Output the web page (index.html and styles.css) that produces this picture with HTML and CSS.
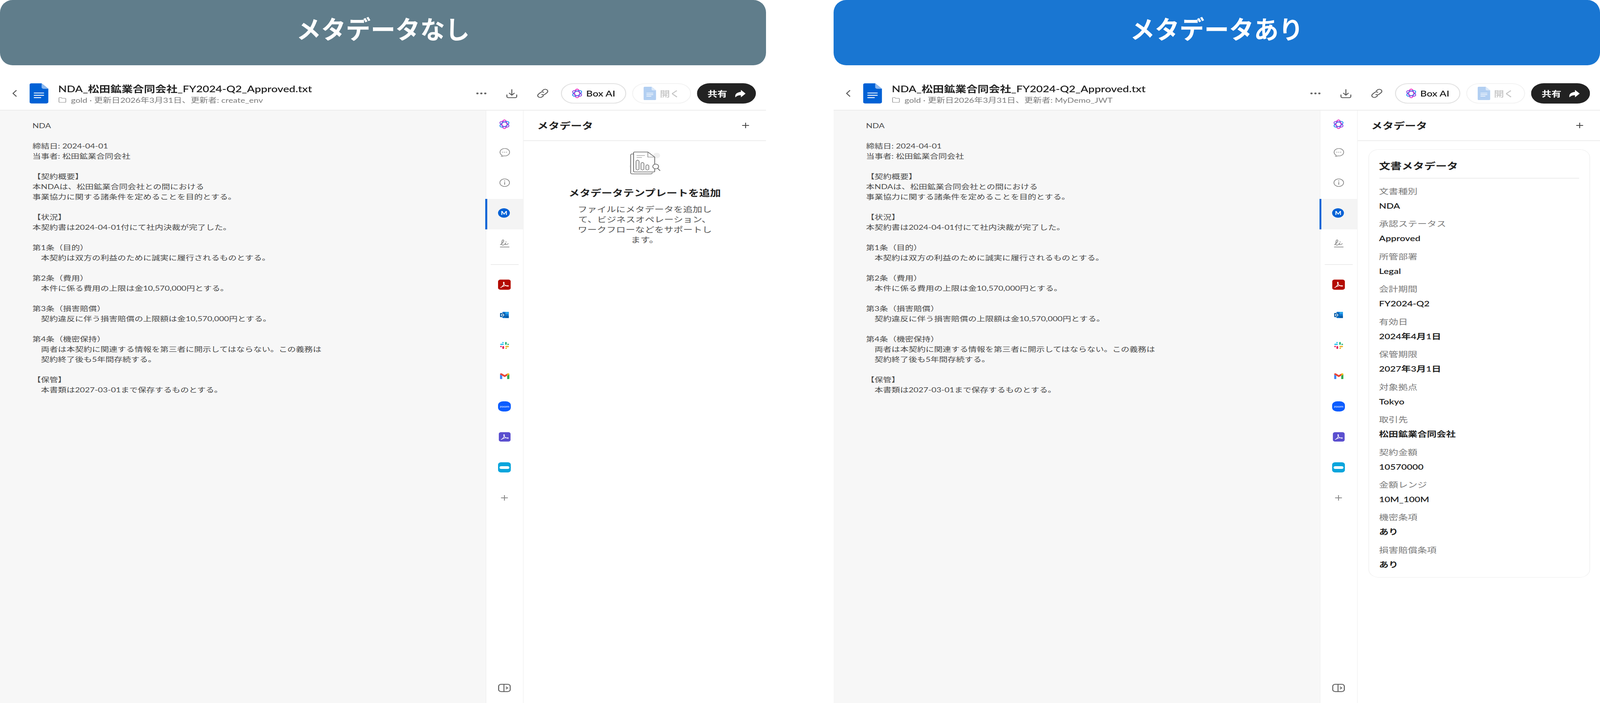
FILE: index.html
```html
<!DOCTYPE html>
<html lang="ja">
<head>
<meta charset="utf-8">
<title>メタデータ比較</title>
<link rel="stylesheet" href="styles.css">
</head>
<body>
<svg class="defs" xmlns="http://www.w3.org/2000/svg">
  <symbol id="i-chevron" viewBox="0 0 12 20"><path d="M9.5 2 2.5 10l7 8" fill="none" stroke="#555" stroke-width="2"/></symbol>
  <symbol id="i-file" viewBox="0 0 39 52">
    <path d="M4 0H25L39 14V48a4 4 0 0 1-4 4H4a4 4 0 0 1-4-4V4a4 4 0 0 1 4-4Z" fill="#0061d5"/>
    <path d="M25 0 39 14H29a4 4 0 0 1-4-4Z" fill="#8db8ee"/>
    <path d="M9 25H30M9 31H30M9 37H24" stroke="#fff" stroke-width="2.2" fill="none"/>
  </symbol>
  <symbol id="i-folder" viewBox="0 0 16 15"><path d="M1 3a1.5 1.5 0 0 1 1.5-1.5h3L7 3.5h6.5A1.5 1.5 0 0 1 15 5v7.5a1.5 1.5 0 0 1-1.5 1.5h-11A1.5 1.5 0 0 1 1 12.500Z" fill="none" stroke="#8a8a8a" stroke-width="1.200"/></symbol>
  <symbol id="i-dots" viewBox="0 0 24 6"><circle cx="4" cy="3" r="2.300" fill="#666"/><circle cx="12" cy="3" r="2.300" fill="#666"/><circle cx="20" cy="3" r="2.300" fill="#666"/></symbol>
  <symbol id="i-download" viewBox="0 0 24 24"><path d="M12 1.500V16M6.500 11 12 16.500 17.500 11M2 15v5a3 3 0 0 0 3 3h14a3 3 0 0 0 3-3v-5" fill="none" stroke="#5a5a5a" stroke-width="2"/></symbol>
  <symbol id="i-link" viewBox="0 0 24 24"><path d="M10 6.500 13.500 3a5 5 0 0 1 7.300 7l-4.300 4.300a5 5 0 0 1-7 0M14 17.500 10.500 21a5 5 0 0 1-7.300-7l4.300-4.300a5 5 0 0 1 7 0" fill="none" stroke="#5a5a5a" stroke-width="2"/></symbol>
  <symbol id="i-atom" viewBox="0 0 24 24" preserveAspectRatio="none">
    <ellipse cx="12" cy="12" rx="5.500" ry="11" fill="none" stroke="#e81fc0" stroke-width="1.800"/>
    <ellipse cx="12" cy="12" rx="5.500" ry="11" fill="none" stroke="#1b8bf0" stroke-width="1.800" transform="rotate(60 12 12)"/>
    <ellipse cx="12" cy="12" rx="5.500" ry="11" fill="none" stroke="#8f3fe0" stroke-width="1.800" transform="rotate(-60 12 12)"/>
  </symbol>
  <symbol id="i-share" viewBox="0 0 24 24"><path d="M14 2 24 12 14 22V16.500c-4.500 0-8.500 1-11.500 5.500-.5 0-.5-2-.5-3.500C2 12 7.500 8 14 7.500Z" fill="#fff"/></symbol>
  <symbol id="i-plus" viewBox="0 0 16 16"><path d="M8 1V15M1 8H15" stroke="currentColor" stroke-width="1.800" fill="none"/></symbol>
  <symbol id="i-comment" viewBox="0 0 24 24"><path d="M12 2a10 10 0 0 0-5.500 18.300c.2 1-.2 2-1 2.700 2 0 3.500-.5 4.500-1.300A10 10 0 1 0 12 2Z" fill="none" stroke="#8a8a8a" stroke-width="1.600"/><circle cx="8" cy="12" r="1" fill="#8a8a8a"/><circle cx="12" cy="12" r="1" fill="#8a8a8a"/><circle cx="16" cy="12" r="1" fill="#8a8a8a"/></symbol>
  <symbol id="i-info" viewBox="0 0 24 24"><circle cx="12" cy="12" r="10.200" fill="none" stroke="#8a8a8a" stroke-width="1.600"/><path d="M12 10.500V17.500" stroke="#8a8a8a" stroke-width="1.800"/><circle cx="12" cy="7.300" r="1.200" fill="#8a8a8a"/></symbol>
  <symbol id="i-sign" viewBox="0 0 24 24"><path d="M2.500 15.500C7 11 10.500 6 10 3.500 9.500 1 7 1.500 6.500 4.500 6 8 5.500 12 6 14.500c.4 2 2.500 2 4.500.5 1.500-1.200 2.500-3 3.500-4-.3 1.500-1 3.800.2 4 1.500.2 3.800-1.500 5.800-3.500" fill="none" stroke="#8a8a8a" stroke-width="1.600"/><circle cx="14.800" cy="6.800" r="1" fill="#8a8a8a"/><path d="M2 21H22" stroke="#8a8a8a" stroke-width="1.700"/></symbol>
  <symbol id="i-pdf" viewBox="0 0 26 26">
    <rect width="26" height="26" rx="5" fill="currentColor"/>
    <path d="M5 20.500c3-1 6.500-6 7.500-11.500.4-2.500-1.500-3.500-1.700-1.500-.2 3.500 4 8.500 8 9.500 3 .6 3.500-1.600.7-1.700-4-.2-9.500 1.200-14.500 5.200Z" fill="none" stroke="#fff" stroke-width="1.400"/>
  </symbol>
  <symbol id="i-outlook" viewBox="0 0 18 18">
    <rect x="5" y="1" width="13" height="16" rx="1" fill="#0f78d4"/>
    <rect x="11" y="1" width="7" height="5.500" fill="#2ba5ec"/>
    <rect x="11" y="11" width="7" height="6" fill="#0a5ea8"/>
    <rect x="0" y="4" width="10.500" height="10.500" rx="1.200" fill="#0a5ea8"/>
    <circle cx="5.200" cy="9.200" r="2.500" fill="none" stroke="#fff" stroke-width="1.300"/>
  </symbol>
  <symbol id="i-slack" viewBox="0 0 20 20">
    <rect x="1" y="5.500" width="7.500" height="3.500" rx="1.750" fill="#36c5f0"/><rect x="5" y="1" width="3.500" height="3.500" rx="1.750" fill="#36c5f0"/>
    <rect x="11" y="1" width="3.500" height="7.500" rx="1.750" fill="#2eb67d"/><rect x="15.500" y="5.500" width="3.500" height="3.500" rx="1.750" fill="#2eb67d"/>
    <rect x="11.500" y="11" width="7.500" height="3.500" rx="1.750" fill="#ecb22e"/><rect x="11.500" y="15.500" width="3.500" height="3.500" rx="1.750" fill="#ecb22e"/>
    <rect x="5.500" y="11.500" width="3.500" height="7.500" rx="1.750" fill="#e01e5a"/><rect x="1" y="11" width="3.500" height="3.500" rx="1.750" fill="#e01e5a"/>
  </symbol>
  <symbol id="i-gmail" viewBox="0 0 19 15">
    <path d="M0 3V14a1 1 0 0 0 1 1H4.500V6.500Z" fill="#4285f4"/>
    <path d="M14.500 6.500V15H18a1 1 0 0 0 1-1V3Z" fill="#34a853"/>
    <path d="M0 2.500C0 .5 2.300-.5 3.800.7L9.500 5 15.200.7 14.500 6.500 9.500 10 4.500 6.500 0 3Z" fill="#ea4335"/>
    <path d="M14.500 6.500 15.200.7C16.700-.5 19 .5 19 2.500V3Z" fill="#fbbc04"/>
  </symbol>
  <symbol id="i-collapse" viewBox="0 0 26 21"><rect x="1.200" y="1.200" width="23.600" height="18.600" rx="5" fill="none" stroke="#666" stroke-width="2.200"/><path d="M12 1V20" stroke="#666" stroke-width="2"/><path d="M16 7.500 19.500 10.500 16 13.500" fill="none" stroke="#666" stroke-width="2"/></symbol>
  <symbol id="i-empty" viewBox="0 0 64 60">
    <circle cx="56" cy="10" r="7" fill="#f0f0f0"/><circle cx="4" cy="38" r="4" fill="#f0f0f0"/>
    <path d="M10 6H6a3 3 0 0 0-3 3V54a3 3 0 0 0 3 3H44a3 3 0 0 0 3-3" fill="#fff" stroke="#666" stroke-width="1.500"/>
    <path d="M9 3a2 2 0 0 1 2-2H38L52 14V50a2 2 0 0 1-2 2H11a2 2 0 0 1-2-2Z" fill="#fff" stroke="#666" stroke-width="1.500"/>
    <path d="M38 1V14H52M15 10H32M15 15H26" fill="none" stroke="#777" stroke-width="1.200"/>
    <rect x="14" y="22" width="6" height="25" rx="3" fill="#fff" stroke="#666" stroke-width="1.300"/><rect x="24" y="28" width="6" height="19" rx="3" fill="#fff" stroke="#666" stroke-width="1.300"/><rect x="34" y="34" width="6" height="13" rx="3" fill="#fff" stroke="#666" stroke-width="1.300"/>
    <circle cx="54" cy="38" r="6" fill="#fff" stroke="#666" stroke-width="1.500"/><path d="M58 43 63 49" stroke="#666" stroke-width="1.800"/>
  </symbol>
</svg>

<main class="page">
  <section class="panel">
    <h1 class="banner banner-gray">メタデータなし</h1>
    <div class="shot">
      <header class="top">
        <svg class="ic-chevron"><use href="#i-chevron"/></svg>
        <svg class="ic-file"><use href="#i-file"/></svg>
        <div class="names">
          <div class="fname">NDA_松田鉱業合同会社_FY2024-Q2_Approved.txt</div>
          <div class="fmeta"><svg class="ic-folder"><use href="#i-folder"/></svg><span>gold · 更新日2026年3月31日、更新者: create_env</span></div>
        </div>
        <div class="actions">
          <span class="act"><svg class="ic-dots"><use href="#i-dots"/></svg></span>
          <span class="act"><svg class="ic-act"><use href="#i-download"/></svg></span>
          <span class="act"><svg class="ic-act"><use href="#i-link"/></svg></span>
          <span class="pill pill-ai"><svg class="ic-atom"><use href="#i-atom"/></svg>Box AI</span>
          <span class="pill pill-open"><svg class="ic-file-sm"><use href="#i-file"/></svg>開く</span>
          <span class="pill pill-share">共有<svg class="ic-share"><use href="#i-share"/></svg></span>
        </div>
      </header>
      <div class="body">
        <article class="doc">NDA

締結日: 2024-04-01
当事者: 松田鉱業合同会社

【契約概要】
本NDAは、松田鉱業合同会社との間における
事業協力に関する諸条件を定めることを目的とする。

【状況】
本契約書は2024-04-01付にて社内決裁が完了した。

第1条（目的）
　本契約は双方の利益のために誠実に履行されるものとする。

第2条（費用）
　本件に係る費用の上限は金10,570,000円とする。

第3条（損害賠償）
　契約違反に伴う損害賠償の上限額は金10,570,000円とする。

第4条（機密保持）
　両者は本契約に関連する情報を第三者に開示してはならない。この義務は
　契約終了後も5年間存続する。

【保管】
　本書類は2027-03-01まで保存するものとする。</article>
        <nav class="rail">
          <span class="tab"><svg class="ic-atom"><use href="#i-atom"/></svg></span>
          <span class="tab"><svg class="ic-rail"><use href="#i-comment"/></svg></span>
          <span class="tab"><svg class="ic-rail"><use href="#i-info"/></svg></span>
          <span class="tab tab-active"><span class="logo-m">M</span></span>
          <span class="tab"><svg class="ic-rail"><use href="#i-sign"/></svg></span>
          <hr class="rail-line">
          <span class="tab"><svg class="ic-pdf c-red"><use href="#i-pdf"/></svg></span>
          <span class="tab"><svg class="ic-outlook"><use href="#i-outlook"/></svg></span>
          <span class="tab"><svg class="ic-slack"><use href="#i-slack"/></svg></span>
          <span class="tab"><svg class="ic-gmail"><use href="#i-gmail"/></svg></span>
          <span class="tab"><span class="logo-zoom">zoom</span></span>
          <span class="tab"><svg class="ic-pdf-sm c-purple"><use href="#i-pdf"/></svg></span>
          <span class="tab"><span class="logo-box"><i></i></span></span>
          <span class="tab c-gray"><svg class="ic-plus"><use href="#i-plus"/></svg></span>
          <span class="tab tab-end"><svg class="ic-collapse"><use href="#i-collapse"/></svg></span>
        </nav>
        <aside class="meta">
          <div class="meta-head"><h2>メタデータ</h2><svg class="ic-plus"><use href="#i-plus"/></svg></div>
          <div class="empty">
            <svg class="ic-empty"><use href="#i-empty"/></svg>
            <h3>メタデータテンプレートを追加</h3>
            <p>ファイルにメタデータを追加して、ビジネスオペレーション、ワークフローなどをサポートします。</p>
          </div>
        </aside>
      </div>
    </div>
  </section>

  <section class="panel">
    <h1 class="banner banner-blue">メタデータあり</h1>
    <div class="shot">
      <header class="top">
        <svg class="ic-chevron"><use href="#i-chevron"/></svg>
        <svg class="ic-file"><use href="#i-file"/></svg>
        <div class="names">
          <div class="fname">NDA_松田鉱業合同会社_FY2024-Q2_Approved.txt</div>
          <div class="fmeta"><svg class="ic-folder"><use href="#i-folder"/></svg><span>gold · 更新日2026年3月31日、更新者: MyDemo_JWT</span></div>
        </div>
        <div class="actions">
          <span class="act"><svg class="ic-dots"><use href="#i-dots"/></svg></span>
          <span class="act"><svg class="ic-act"><use href="#i-download"/></svg></span>
          <span class="act"><svg class="ic-act"><use href="#i-link"/></svg></span>
          <span class="pill pill-ai"><svg class="ic-atom"><use href="#i-atom"/></svg>Box AI</span>
          <span class="pill pill-open"><svg class="ic-file-sm"><use href="#i-file"/></svg>開く</span>
          <span class="pill pill-share">共有<svg class="ic-share"><use href="#i-share"/></svg></span>
        </div>
      </header>
      <div class="body">
        <article class="doc">NDA

締結日: 2024-04-01
当事者: 松田鉱業合同会社

【契約概要】
本NDAは、松田鉱業合同会社との間における
事業協力に関する諸条件を定めることを目的とする。

【状況】
本契約書は2024-04-01付にて社内決裁が完了した。

第1条（目的）
　本契約は双方の利益のために誠実に履行されるものとする。

第2条（費用）
　本件に係る費用の上限は金10,570,000円とする。

第3条（損害賠償）
　契約違反に伴う損害賠償の上限額は金10,570,000円とする。

第4条（機密保持）
　両者は本契約に関連する情報を第三者に開示してはならない。この義務は
　契約終了後も5年間存続する。

【保管】
　本書類は2027-03-01まで保存するものとする。</article>
        <nav class="rail">
          <span class="tab"><svg class="ic-atom"><use href="#i-atom"/></svg></span>
          <span class="tab"><svg class="ic-rail"><use href="#i-comment"/></svg></span>
          <span class="tab"><svg class="ic-rail"><use href="#i-info"/></svg></span>
          <span class="tab tab-active"><span class="logo-m">M</span></span>
          <span class="tab"><svg class="ic-rail"><use href="#i-sign"/></svg></span>
          <hr class="rail-line">
          <span class="tab"><svg class="ic-pdf c-red"><use href="#i-pdf"/></svg></span>
          <span class="tab"><svg class="ic-outlook"><use href="#i-outlook"/></svg></span>
          <span class="tab"><svg class="ic-slack"><use href="#i-slack"/></svg></span>
          <span class="tab"><svg class="ic-gmail"><use href="#i-gmail"/></svg></span>
          <span class="tab"><span class="logo-zoom">zoom</span></span>
          <span class="tab"><svg class="ic-pdf-sm c-purple"><use href="#i-pdf"/></svg></span>
          <span class="tab"><span class="logo-box"><i></i></span></span>
          <span class="tab c-gray"><svg class="ic-plus"><use href="#i-plus"/></svg></span>
          <span class="tab tab-end"><svg class="ic-collapse"><use href="#i-collapse"/></svg></span>
        </nav>
        <aside class="meta">
          <div class="meta-head"><h2>メタデータ</h2><svg class="ic-plus"><use href="#i-plus"/></svg></div>
          <div class="card">
            <h3 class="card-title">文書メタデータ</h3>
            <dl class="fields">
              <div class="field"><dt>文書種別</dt><dd>NDA</dd></div>
              <div class="field"><dt>承認ステータス</dt><dd>Approved</dd></div>
              <div class="field"><dt>所管部署</dt><dd>Legal</dd></div>
              <div class="field"><dt>会計期間</dt><dd>FY2024-Q2</dd></div>
              <div class="field"><dt>有効日</dt><dd>2024年4月1日</dd></div>
              <div class="field"><dt>保管期限</dt><dd>2027年3月1日</dd></div>
              <div class="field"><dt>対象拠点</dt><dd>Tokyo</dd></div>
              <div class="field"><dt>取引先</dt><dd>松田鉱業合同会社</dd></div>
              <div class="field"><dt>契約金額</dt><dd>10570000</dd></div>
              <div class="field"><dt>金額レンジ</dt><dd>10M_100M</dd></div>
              <div class="field"><dt>機密条項</dt><dd>あり</dd></div>
              <div class="field"><dt>損害賠償条項</dt><dd>あり</dd></div>
            </dl>
          </div>
        </aside>
      </div>
    </div>
  </section>
</main>
</body>
</html>
```

FILE: styles.css
```css
* { box-sizing: border-box; }
html, body { margin: 0; padding: 0; width: 100%; height: 100%; overflow: hidden; background: #fff; }
body { font-family: Lato, "Noto Sans CJK JP", sans-serif; color: #222; }
h1, h2, h3, p, dl, dd, dt { margin: 0; }
svg { display: block; flex: none; }
.defs { display: none; }

.page { display: flex; justify-content: space-between; width: 100%; height: 100%; }
.panel { width: 47.885%; height: 100%; overflow: hidden; display: flex; flex-direction: column; }
.panel + .panel { width: 47.91%; }

.banner { height: 167px; flex: none; margin-bottom: 32px; border-radius: 32px; display: flex; align-items: center; justify-content: center; padding-bottom: 25px; color: #fff; font: 700 63.400px "Noto Sans CJK JP", sans-serif; }
.banner-gray { background: #607d8b; }
.banner-blue { background: #1976d2; }

/* The app screenshot in the source is stretched sideways. */
.shot { width: 1560px; flex: 1; display: flex; flex-direction: column; min-height: 0; transform: scaleX(1.2574); transform-origin: left top; filter: blur(.5px); }
.panel + .panel .shot { width: 1561px; }

.top { height: 84px; flex: none; display: flex; align-items: center; padding: 0 21px 2px 24px; border-bottom: 2px solid #ececec; }
.ic-chevron { width: 12px; height: 20px; margin-right: 24px; }
.ic-file { width: 38.500px; height: 52px; margin-right: 20px; }
.names { flex: 1; min-width: 0; display: flex; flex-direction: column; }
.fname { font-size: 22.800px; line-height: 30px; font-weight: 600; color: #222; white-space: nowrap; }
.fmeta { display: flex; align-items: center; gap: 10px; font-size: 17.800px; line-height: 22px; margin-top: 3px; color: #7a7a7a; white-space: nowrap; }
.ic-folder { width: 16px; height: 15px; }
.actions { display: flex; align-items: center; }
.act { width: 62.500px; height: 52px; display: flex; align-items: center; justify-content: center; }
.ic-dots { width: 24px; height: 6px; }
.ic-act { width: 24px; height: 24px; }
.pill { height: 52px; border-radius: 26px; display: flex; align-items: center; justify-content: center; border: 2px solid transparent; white-space: nowrap; }
.pill-ai { width: 133px; margin-left: 6px; gap: 7px; border-color: #e2e2e2; font-size: 20.500px; font-weight: 600; color: #222; }
.pill-open { width: 120px; margin-left: 12px; gap: 8px; border-color: #f3f3f3; font-size: 20.500px; font-weight: 500; color: #c4c4c4; }
.pill-share { width: 120px; margin-left: 12px; gap: 14px; background: #222; color: #fff; font-size: 20px; font-weight: 600; }
.ic-atom { width: 22px; height: 24px; }
.ic-file-sm { width: 26px; height: 34px; opacity: .3; }
.ic-share { width: 23px; height: 23px; }

.body { flex: 1; min-height: 0; display: flex; }
.doc { flex: 1; min-width: 0; background: #f7f7f7; padding: 26px 0 0 66px; font-size: 17.330px; line-height: 26px; color: #4c4c4c; white-space: pre; }
.rail { width: 77px; flex: none; background: #fff; display: flex; flex-direction: column; align-items: stretch; border-left: 1.500px solid #ececec; border-right: 1.500px solid #ececec; }
.tab { height: 78px; flex: none; display: flex; align-items: center; justify-content: center; padding-bottom: 6px; }
.tab:first-child { height: 70px; padding-bottom: 0; }
.tab-active { background: #f4f4f4; box-shadow: inset 4px 0 0 #0061d5; margin-left: -1.500px; }
.tab-end { margin-top: auto; padding-bottom: 0; }
.rail-line { width: 57px; height: 2px; margin: 11px auto 14px; border: 0; background: #ececec; flex: none; }
.ic-rail { width: 23px; height: 23px; }
.ic-pdf { width: 26px; height: 27px; }
.ic-pdf-sm { width: 25px; height: 24px; }
.c-red { color: #b30b00; }
.c-purple { color: #5b4fcf; }
.c-gray { color: #888; }
.ic-outlook { width: 18px; height: 18px; }
.ic-slack { width: 20.500px; height: 20px; }
.ic-gmail { width: 19px; height: 15px; }
.ic-plus { width: 16px; height: 16px; color: #444; }
.c-gray .ic-plus { color: #888; }
.ic-collapse { width: 26px; height: 21px; }
.logo-m { width: 24px; height: 24px; border-radius: 50%; background: #0061d5; color: #fff; display: flex; align-items: center; justify-content: center; font-size: 14px; font-weight: 700; line-height: 1; }
.logo-zoom { width: 26px; height: 26px; border-radius: 10px; background: #0b5cff; color: #fff; display: flex; align-items: center; justify-content: center; font-size: 8px; line-height: 1; }
.logo-box { width: 26px; height: 26px; border-radius: 6px; background: #0aa5dc; display: flex; align-items: center; justify-content: center; }
.logo-box i { width: 20px; height: 7px; border-radius: 4px; background: #fff; display: block; }

.meta { width: 494.500px; flex: none; background: #fff; display: flex; flex-direction: column; }
.meta-head { height: 78px; flex: none; display: flex; align-items: center; justify-content: space-between; padding: 0 34px 0 28px; border-bottom: 2px solid #ececec; }
.meta-head h2 { font-size: 22.800px; font-weight: 600; color: #222; line-height: 30px; }

.empty { display: flex; flex-direction: column; align-items: center; padding-top: 27px; }
.ic-empty { width: 64px; height: 60px; }
.empty h3 { margin-top: 31px; font-size: 22.200px; line-height: 30px; font-weight: 600; color: #222; }
.empty p { width: 275px; margin-top: 14px; font-size: 19.500px; line-height: 26px; text-align: center; color: #555; }

.card { margin: 21px 21.500px 0 22px; border: 1.500px solid #ececec; border-radius: 21px; padding: 0 21px 19px; }
.card-title { height: 74px; padding-top: 8px; display: flex; align-items: center; font-size: 23px; font-weight: 600; color: #222; border-bottom: 2px solid #ececec; }
.fields { display: flex; flex-direction: column; gap: 20.450px; padding-top: 20px; }
.field { display: flex; flex-direction: column; gap: 11px; }
.field dt { font-size: 19.500px; line-height: 26px; color: #7a7a7a; }
.field dd { font-size: 19.500px; line-height: 26px; font-weight: 600; color: #222; }
```
